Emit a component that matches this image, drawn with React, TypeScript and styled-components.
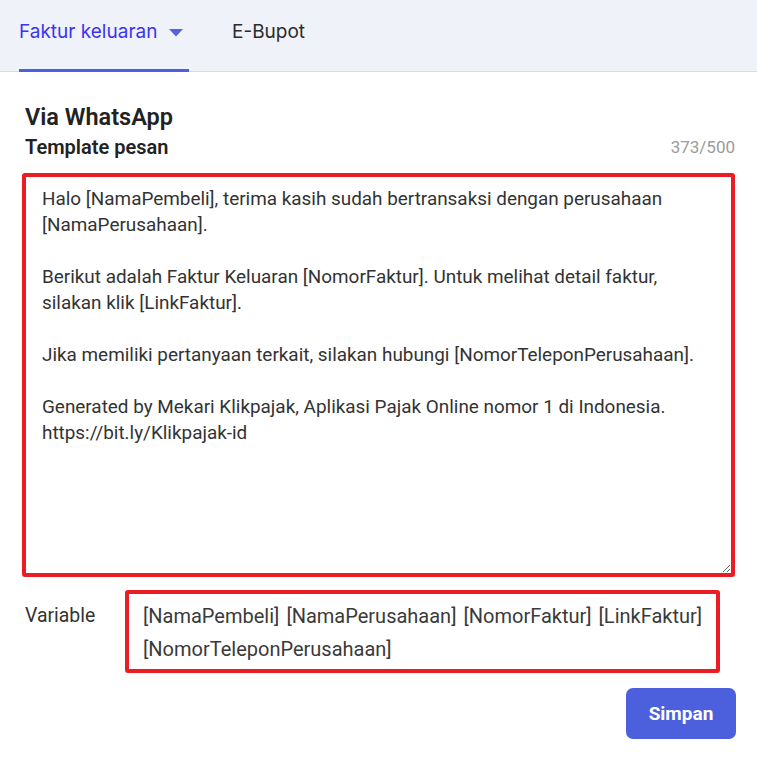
import React from 'react';
import styled, { createGlobalStyle } from 'styled-components';

const GlobalStyle = createGlobalStyle`
  body {
    margin: 0;
    background: #fff;
    font-family: Roboto, "Liberation Sans", sans-serif;
  }
`;

const message = `Halo [NamaPembeli], terima kasih sudah bertransaksi dengan perusahaan [NamaPerusahaan].

Berikut adalah Faktur Keluaran [NomorFaktur]. Untuk melihat detail faktur, silakan klik [LinkFaktur].

Jika memiliki pertanyaan terkait, silakan hubungi [NomorTeleponPerusahaan].

Generated by Mekari Klikpajak, Aplikasi Pajak Online nomor 1 di Indonesia.
https://bit.ly/Klikpajak-id`;

const variables = ['[NamaPembeli]', '[NamaPerusahaan]', '[NomorFaktur]', '[LinkFaktur]', '[NomorTeleponPerusahaan]'];

const App: React.FC = () => {
  return (
    <>
      <GlobalStyle />
      <TabBar>
        <Tab active>
          Faktur keluaran
          <Caret viewBox="0 0 14 8">
            <path d="M0 0 L14 0 L7 7.5 Z" fill="#5462dd" />
          </Caret>
        </Tab>
        <Tab>E-Bupot</Tab>
      </TabBar>
      <Content>
        <Title>Via WhatsApp</Title>
        <LabelRow>
          <Label>Template pesan</Label>
          <Counter>373/500</Counter>
        </LabelRow>
        <MessageArea defaultValue={message} spellCheck={false} />
        <VariableRow>
          <VariableLabel>Variable</VariableLabel>
          <VariableBox>
            {variables.map((v) => (
              <Chip key={v}>{v}</Chip>
            ))}
          </VariableBox>
        </VariableRow>
        <Actions>
          <SaveButton>Simpan</SaveButton>
        </Actions>
      </Content>
    </>
  );
};

export default App;

const TabBar = styled.div`
  display: flex;
  align-items: stretch;
  height: 71px;
  padding-left: 19px;
  background: #eff2f8;
  border-bottom: 1px solid #d9dce3;
`;

const Tab = styled.div<{ active?: boolean }>`
  position: relative;
  display: flex;
  align-items: center;
  gap: 12px;
  width: ${(p) => (p.active ? '170px' : 'auto')};
  margin-right: ${(p) => (p.active ? '43px' : '0')};
  padding-bottom: 8px;
  font-family: Inter, "Liberation Sans", sans-serif;
  font-size: 19px;
  color: ${(p) => (p.active ? '#3b32f2' : '#2b2b2b')};

  &::after {
    content: '';
    display: ${(p) => (p.active ? 'block' : 'none')};
    position: absolute;
    left: 0;
    right: 0;
    bottom: -1px;
    height: 3px;
    background: #4d5fdc;
  }
`;

const Caret = styled.svg`
  width: 14px;
  height: 8px;
  margin-top: 2px;
`;

const Content = styled.div`
  padding: 31px 22px 20px 22px;
  display: flex;
  flex-direction: column;
`;

const Title = styled.h1`
  margin: 0 0 4px 3px;
  font-size: 23.5px;
  line-height: 28px;
  font-weight: 600;
  color: #222;
`;

const LabelRow = styled.div`
  display: flex;
  justify-content: space-between;
  align-items: center;
  margin: 0 0 14px 3px;
  height: 24px;
`;

const Label = styled.div`
  font-size: 20px;
  font-weight: 600;
  color: #222;
`;

const Counter = styled.div`
  font-size: 17px;
  color: #9b9b9b;
`;

const MessageArea = styled.textarea`
  display: block;
  box-sizing: border-box;
  width: 100%;
  height: 404px;
  margin: 0;
  padding: 9px 16px 8px;
  border: 4px solid #ec1c24;
  border-radius: 3px;
  font-family: Roboto, "Liberation Sans", sans-serif;
  font-size: 18.9px;
  line-height: 26px;
  color: #333;
  outline: none;
  resize: vertical;
`;

const VariableRow = styled.div`
  display: flex;
  align-items: flex-start;
  margin-top: 13px;
`;

const VariableLabel = styled.div`
  width: 103px;
  padding: 14px 0 0 3px;
  box-sizing: border-box;
  font-size: 19.4px;
  line-height: 24px;
  color: #333;
`;

const VariableBox = styled.div`
  box-sizing: border-box;
  width: 595px;
  display: flex;
  flex-wrap: wrap;
  column-gap: 7px;
  row-gap: 9px;
  padding: 10px 8px 8px 14px;
  border: 4px solid #ec1c24;
  border-radius: 3px;
`;

const Chip = styled.span`
  font-size: 20px;
  line-height: 24px;
  color: #3a3a3a;
`;

const Actions = styled.div`
  display: flex;
  justify-content: flex-end;
  margin-top: 15px;
  margin-right: -1px;
`;

const SaveButton = styled.button`
  width: 110px;
  height: 51px;
  border: none;
  border-radius: 7px;
  background: #4c60dd;
  color: #fff;
  font-family: Roboto, "Liberation Sans", sans-serif;
  font-size: 19px;
  font-weight: 700;
  cursor: pointer;
`;
